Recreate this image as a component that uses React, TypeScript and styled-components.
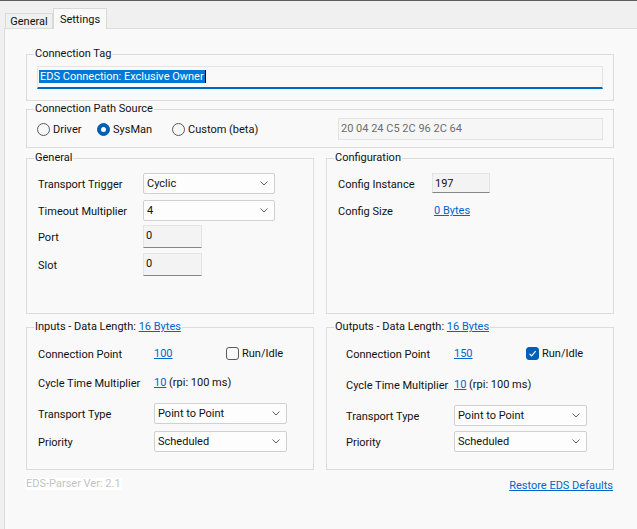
import React from "react";
import styled, { createGlobalStyle } from "styled-components";

const GlobalStyle = createGlobalStyle`
  html, body {
    margin: 0;
    padding: 0;
    background: #f0f0f0;
  }
  body {
    font-family: Roboto, "Liberation Sans", Arial, sans-serif;
    font-size: 11px;
    color: #111;
  }
  * {
    box-sizing: border-box;
  }
`;

const Window = styled.div`
  width: 637px;
  height: 529px;
  overflow: hidden;
  border-top: 1px solid #5c5c5c;
  display: flex;
  flex-direction: column;
`;

const TabBar = styled.div`
  height: 27px;
  flex: none;
  display: flex;
  align-items: flex-end;
  padding-left: 5px;
  position: relative;
  z-index: 1;
`;

const Tab = styled.div<{ $w: number; $active?: boolean }>`
  width: ${(p) => p.$w}px;
  height: ${(p) => (p.$active ? 21 : 15)}px;
  margin-bottom: ${(p) => (p.$active ? -1 : 0)}px;
  display: flex;
  align-items: center;
  justify-content: center;
  border: 1px solid #d9d9d9;
  border-bottom: none;
  background: ${(p) => (p.$active ? "#f9f9f9" : "#f0f0f0")};
`;

const Panel = styled.div`
  flex: 1;
  margin-left: 4px;
  border-left: 1px solid #dcdcdc;
  border-top: 1px solid #dcdcdc;
  background: #f9f9f9;
  padding: 18px 0 0 21px;
`;

const Content = styled.div`
  width: 588px;
`;

const Group = styled.fieldset<{ $h?: number; $mt?: number }>`
  margin: ${(p) => p.$mt ?? 0}px 0 0 0;
  padding: 0;
  min-width: 0;
  border: 1px solid #dcdcdc;
  ${(p) => (p.$h ? `height: ${p.$h}px;` : "")}
`;

const Legend = styled.legend`
  margin-left: 7px;
  padding: 0 1px;
  line-height: 14px;
  font-size: 11px;
`;

const Columns = styled.div<{ $mt: number }>`
  display: grid;
  grid-template-columns: 288px 288px;
  column-gap: 12px;
  margin-top: ${(p) => p.$mt}px;
`;

const TagBody = styled.div`
  padding: 5px 10px 11px;
`;

const TagInput = styled.div`
  height: 23px;
  border: 1px solid #e4e4e4;
  border-bottom: 2px solid #0067c0;
  background: #f9f9f9;
  padding: 3px 1px 0;
  display: flex;
  align-items: flex-start;
`;

const Selected = styled.span`
  line-height: 13px;
  background: #0078d7;
  color: #fff;
  padding: 0 1px;
`;

const Caret = styled.span`
  width: 1px;
  height: 13px;
  background: #000;
`;

const PathBody = styled.div`
  display: flex;
  align-items: center;
  padding: 2px 10px 7px;
`;

const RadioOption = styled.label<{ $w?: number }>`
  display: flex;
  align-items: center;
  gap: 3px;
  ${(p) => (p.$w ? `width: ${p.$w}px;` : "")}
  flex: none;
`;

const RadioDot = styled.span<{ $on?: boolean }>`
  width: 13px;
  height: 13px;
  border-radius: 50%;
  border: 1px solid ${(p) => (p.$on ? "#005fb8" : "#5a5a5a")};
  background: ${(p) => (p.$on ? "#005fb8" : "#f7f7f7")};
  display: flex;
  align-items: center;
  justify-content: center;
  &::after {
    content: "";
    width: 5px;
    height: 5px;
    border-radius: 50%;
    background: ${(p) => (p.$on ? "#fff" : "transparent")};
  }
`;

const PathBox = styled.div`
  margin-left: auto;
  width: 265px;
  height: 22px;
  border: 1px solid #e3e3e3;
  background: #f6f6f6;
  color: #6d6d6d;
  padding: 3px 2px 0;
  line-height: 14px;
`;

const Body = styled.div<{ $pl: number; $pt: number }>`
  padding: ${(p) => p.$pt}px 0 0 ${(p) => p.$pl}px;
`;

const Row = styled.div<{ $h: number; $mt?: number }>`
  display: flex;
  align-items: center;
  height: ${(p) => p.$h}px;
  margin-top: ${(p) => p.$mt ?? 0}px;
`;

const Label = styled.span<{ $w: number }>`
  width: ${(p) => p.$w}px;
  flex: none;
  white-space: nowrap;
  padding-top: 2px;
`;

const Select = styled.div<{ $w: number }>`
  width: ${(p) => p.$w}px;
  height: 21px;
  border: 1px solid #d0d0d0;
  border-radius: 2px;
  background: #fdfdfd;
  display: flex;
  align-items: center;
  justify-content: space-between;
  padding: 0 6px 0 3px;
`;

const TextBox = styled.div<{ $w: number; $h: number }>`
  width: ${(p) => p.$w}px;
  height: ${(p) => p.$h}px;
  border: 1px solid #e4e4e4;
  border-bottom-color: #868686;
  background: #f3f3f3;
  padding: 3px 2px 0;
  line-height: 14px;
`;

const Link = styled.a<{ $ml?: number }>`
  color: #0066cc;
  text-decoration: underline;
  cursor: pointer;
  margin-left: ${(p) => p.$ml ?? 0}px;
`;

const ValueCell = styled.span`
  width: 72px;
  flex: none;
`;

const CheckOption = styled.label`
  display: flex;
  align-items: center;
  gap: 3px;
`;

const CheckBox = styled.span<{ $on?: boolean }>`
  width: 13px;
  height: 13px;
  border-radius: 3px;
  border: 1px solid ${(p) => (p.$on ? "#005fb8" : "#5a5a5a")};
  background: ${(p) => (p.$on ? "#005fb8" : "#f9f9f9")};
  display: flex;
  align-items: center;
  justify-content: center;
`;

const Footer = styled.div`
  display: flex;
  justify-content: space-between;
  align-items: flex-start;
  margin-top: 8px;
`;

const Version = styled.span`
  margin-left: -1px;
  padding: 0 1px;
  background: #ffffff;
  color: #c4c4c4;
  line-height: 12px;
`;

const Restore = styled(Link)`
  line-height: 16px;
  margin-right: 1px;
`;

const Chevron = () => (
  <svg width="8" height="5" viewBox="0 0 8 5">
    <path d="M0.5 0.5 L4 4 L7.5 0.5" fill="none" stroke="#606060" strokeWidth="1" />
  </svg>
);

const Check = () => (
  <svg width="11" height="11" viewBox="0 0 11 11">
    <path d="M2.5 5.8 L4.6 7.9 L8.7 3.2" fill="none" stroke="#fff" strokeWidth="1.2" />
  </svg>
);

const Dropdown = ({ w, value }: { w: number; value: string }) => (
  <Select $w={w}>
    <span>{value}</span>
    <Chevron />
  </Select>
);

export default function App() {
  return (
    <>
      <GlobalStyle />
      <Window>
        <TabBar>
          <Tab $w={48}>General</Tab>
          <Tab $w={54} $active>
            Settings
          </Tab>
        </TabBar>
        <Panel>
          <Content>
            <Group>
              <Legend>Connection Tag</Legend>
              <TagBody>
                <TagInput>
                  <Selected>EDS Connection: Exclusive Owner</Selected>
                  <Caret />
                </TagInput>
              </TagBody>
            </Group>

            <Group $mt={1}>
              <Legend>Connection Path Source</Legend>
              <PathBody>
                <RadioOption $w={60}>
                  <RadioDot />
                  Driver
                </RadioOption>
                <RadioOption $w={75}>
                  <RadioDot $on />
                  SysMan
                </RadioOption>
                <RadioOption>
                  <RadioDot />
                  Custom (beta)
                </RadioOption>
                <PathBox>20 04 24 C5 2C 96 2C 64</PathBox>
              </PathBody>
            </Group>

            <Columns $mt={3}>
              <Group $h={163}>
                <Legend>General</Legend>
                <Body $pl={11} $pt={8}>
                  <Row $h={21}>
                    <Label $w={105}>Transport Trigger</Label>
                    <Dropdown w={132} value="Cyclic" />
                  </Row>
                  <Row $h={21} $mt={6}>
                    <Label $w={105}>Timeout Multiplier</Label>
                    <Dropdown w={132} value="4" />
                  </Row>
                  <Row $h={23} $mt={4}>
                    <Label $w={105}>Port</Label>
                    <TextBox $w={59} $h={23}>0</TextBox>
                  </Row>
                  <Row $h={23} $mt={5}>
                    <Label $w={105}>Slot</Label>
                    <TextBox $w={59} $h={23}>0</TextBox>
                  </Row>
                </Body>
              </Group>
              <Group $h={163}>
                <Legend>Configuration</Legend>
                <Body $pl={11} $pt={8}>
                  <Row $h={20}>
                    <Label $w={94}>Config Instance</Label>
                    <TextBox $w={58} $h={20}>197</TextBox>
                  </Row>
                  <Row $h={21} $mt={7}>
                    <Label $w={94}>Config Size</Label>
                    <Link $ml={2}>0 Bytes</Link>
                  </Row>
                </Body>
              </Group>
            </Columns>

            <Columns $mt={6}>
              <Group $h={150}>
                <Legend>
                  Inputs - Data Length: <Link>16 Bytes</Link>
                </Legend>
                <Body $pl={11} $pt={9}>
                  <Row $h={21}>
                    <Label $w={116}>Connection Point</Label>
                    <ValueCell>
                      <Link>100</Link>
                    </ValueCell>
                    <CheckOption>
                      <CheckBox />
                      Run/Idle
                    </CheckOption>
                  </Row>
                  <Row $h={21} $mt={8}>
                    <Label $w={116}>Cycle Time Multiplier</Label>
                    <span>
                      <Link>10</Link> (rpi: 100 ms)
                    </span>
                  </Row>
                  <Row $h={21} $mt={10}>
                    <Label $w={116}>Transport Type</Label>
                    <Dropdown w={133} value="Point to Point" />
                  </Row>
                  <Row $h={21} $mt={7}>
                    <Label $w={116}>Priority</Label>
                    <Dropdown w={133} value="Scheduled" />
                  </Row>
                </Body>
              </Group>
              <Group $h={150}>
                <Legend>
                  Outputs - Data Length: <Link>16 Bytes</Link>
                </Legend>
                <Body $pl={19} $pt={9}>
                  <Row $h={21}>
                    <Label $w={108}>Connection Point</Label>
                    <ValueCell>
                      <Link>150</Link>
                    </ValueCell>
                    <CheckOption>
                      <CheckBox $on>
                        <Check />
                      </CheckBox>
                      Run/Idle
                    </CheckOption>
                  </Row>
                  <Row $h={21} $mt={10}>
                    <Label $w={108}>Cycle Time Multiplier</Label>
                    <span>
                      <Link>10</Link> (rpi: 100 ms)
                    </span>
                  </Row>
                  <Row $h={21} $mt={10}>
                    <Label $w={108}>Transport Type</Label>
                    <Dropdown w={133} value="Point to Point" />
                  </Row>
                  <Row $h={21} $mt={5}>
                    <Label $w={108}>Priority</Label>
                    <Dropdown w={133} value="Scheduled" />
                  </Row>
                </Body>
              </Group>
            </Columns>

            <Footer>
              <Version>EDS-Parser Ver: 2.1</Version>
              <Restore>Restore EDS Defaults</Restore>
            </Footer>
          </Content>
        </Panel>
      </Window>
    </>
  );
}
